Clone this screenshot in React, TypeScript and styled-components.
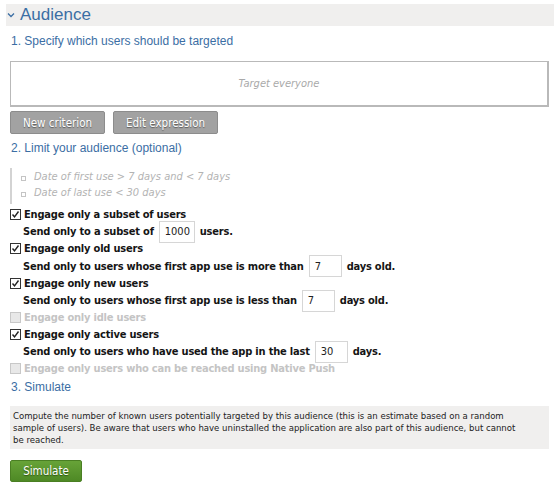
import React from "react";
import styled, { createGlobalStyle } from "styled-components";

const Global = createGlobalStyle`
  html, body { margin: 0; padding: 0; background: #fff; }
  body { font-family: "DejaVu Sans", Verdana, sans-serif; }
`;

const Page = styled.div`
  padding: 4px 4px 0 6px;
  width: 548px;
`;

const HeaderBar = styled.div`
  display: flex;
  align-items: center;
  height: 22px;
  background: #f0efee;
  padding-left: 1px;
  gap: 5px;
`;

const Title = styled.h1`
  margin: 0;
  font: 17px/22px "Liberation Sans", Arial, sans-serif;
  color: #3b6ea4;
`;

const Body = styled.div`
  padding: 0 0 0 4px;
  width: 539px;
`;

const StepTitle = styled.div<{ $top: number }>`
  font: 12px/16px "Liberation Sans", Arial, sans-serif;
  color: #3b6ea4;
  margin-top: ${(p) => p.$top}px;
  padding-left: 1px;
`;

const TargetBox = styled.div`
  margin-top: 12px;
  height: 43px;
  border: 2px solid #b9b9b9;
  border-width: 1px 2px 2px 1px;
  display: flex;
  align-items: center;
  justify-content: center;
  font: italic 11px "DejaVu Sans Condensed", "DejaVu Sans", sans-serif;
  color: #a9a9a9;
`;

const ButtonRow = styled.div`
  display: flex;
  gap: 8px;
  margin-top: 4px;
`;

const GreyButton = styled.button<{ $w: number }>`
  width: ${(p) => p.$w}px;
  height: 23px;
  background: #a2a2a2;
  border: 1px solid #8c8c8c;
  border-radius: 2px;
  color: #fff;
  font: 11.5px "DejaVu Sans Condensed", "DejaVu Sans", sans-serif;
  text-shadow: 0 1px 1px #5a5a5a;
  padding: 0;
`;

const Quote = styled.ul`
  margin: 12px 0 0 0;
  padding: 1px 0 3px 22px;
  border-left: 2px solid #d3d3d3;
  list-style: none;
`;

const QuoteItem = styled.li`
  position: relative;
  font: italic 11px/16px "DejaVu Sans Condensed", "DejaVu Sans", sans-serif;
  color: #b3b3b3;
  &::before {
    content: "";
    position: absolute;
    left: -13px;
    top: 7px;
    width: 3px;
    height: 3px;
    border: 1px solid #c4c4c4;
  }
`;

const Options = styled.div`
  margin-top: 2px;
  display: flex;
  flex-direction: column;
`;

const CheckRow = styled.label<{ $disabled?: boolean }>`
  display: flex;
  align-items: center;
  gap: 3px;
  height: 16.5px;
  font: bold 11px "DejaVu Sans Condensed", "DejaVu Sans", sans-serif;
  letter-spacing: -0.2px;
  color: ${(p) => (p.$disabled ? "#c4c4c4" : "#151515")};
`;

const Box = styled.span<{ $disabled?: boolean }>`
  width: 11px;
  height: 11px;
  box-sizing: border-box;
  border: 1px solid ${(p) => (p.$disabled ? "#c8c8c8" : "#333")};
  background: ${(p) => (p.$disabled ? "#e8e8e8" : "#fff")};
  display: flex;
  align-items: center;
  justify-content: center;
`;

const SubRow = styled.div`
  display: flex;
  align-items: center;
  height: 18px;
  padding-left: 13px;
  gap: 5px;
  font: bold 11px "DejaVu Sans Condensed", "DejaVu Sans", sans-serif;
  letter-spacing: -0.2px;
  color: #151515;
`;

const NumInput = styled.span<{ $w: number }>`
  display: inline-flex;
  align-items: center;
  width: ${(p) => p.$w}px;
  height: 22px;
  box-sizing: border-box;
  border: 1px solid #d6d6d6;
  padding-left: 5px;
  font: 11px "DejaVu Sans Condensed", "DejaVu Sans", sans-serif;
  letter-spacing: 0;
  color: #222;
`;

const InfoBox = styled.div`
  margin-top: 11px;
  background: #f0efee;
  padding: 4px 31px 3px 3px;
  font: 9.5px/12px "DejaVu Sans Condensed", "DejaVu Sans", sans-serif;
  color: #222;
`;

const GreenButton = styled.button`
  margin-top: 11px;
  width: 72px;
  height: 22px;
  border: 1px solid #4a7f23;
  border-radius: 2px;
  background: linear-gradient(#67a338, #4e8925);
  color: #fff;
  font: 11.5px "DejaVu Sans Condensed", "DejaVu Sans", sans-serif;
  text-shadow: 0 1px 1px #2d5412;
  padding: 0;
`;

const Check = ({ checked, disabled }: { checked?: boolean; disabled?: boolean }) => (
  <Box $disabled={disabled}>
    {checked && (
      <svg width="9" height="9" viewBox="0 0 9 9">
        <path d="M1.5 4.5 L3.5 6.8 L7.5 1.5" fill="none" stroke="#222" strokeWidth="1.4" />
      </svg>
    )}
  </Box>
);

export default function App() {
  return (
    <>
      <Global />
      <Page>
        <HeaderBar>
          <svg width="8" height="6" viewBox="0 0 8 6">
            <path d="M1 1.5 L4 4.5 L7 1.5" fill="none" stroke="#3b6ea4" strokeWidth="1.3" />
          </svg>
          <Title>Audience</Title>
        </HeaderBar>
        <Body>
          <StepTitle $top={7}>1. Specify which users should be targeted</StepTitle>
          <TargetBox>Target everyone</TargetBox>
          <ButtonRow>
            <GreyButton $w={95}>New criterion</GreyButton>
            <GreyButton $w={105}>Edit expression</GreyButton>
          </ButtonRow>
          <StepTitle $top={6}>2. Limit your audience (optional)</StepTitle>
          <Quote>
            <QuoteItem>Date of first use &gt; 7 days and &lt; 7 days</QuoteItem>
            <QuoteItem>Date of last use &lt; 30 days</QuoteItem>
          </Quote>
          <Options>
            <CheckRow><Check checked />Engage only a subset of users</CheckRow>
            <SubRow>Send only to a subset of <NumInput $w={36}>1000</NumInput> users.</SubRow>
            <CheckRow><Check checked />Engage only old users</CheckRow>
            <SubRow>Send only to users whose first app use is more than <NumInput $w={33}>7</NumInput> days old.</SubRow>
            <CheckRow><Check checked />Engage only new users</CheckRow>
            <SubRow>Send only to users whose first app use is less than <NumInput $w={33}>7</NumInput> days old.</SubRow>
            <CheckRow $disabled><Check disabled />Engage only idle users</CheckRow>
            <CheckRow><Check checked />Engage only active users</CheckRow>
            <SubRow>Send only to users who have used the app in the last <NumInput $w={33}>30</NumInput> days.</SubRow>
            <CheckRow $disabled><Check disabled />Engage only users who can be reached using Native Push</CheckRow>
          </Options>
          <StepTitle $top={2}>3. Simulate</StepTitle>
          <InfoBox>
            Compute the number of known users potentially targeted by this audience (this is an estimate based on a random sample of users). Be aware that users who have uninstalled the application are also part of this audience, but cannot be reached.
          </InfoBox>
          <GreenButton>Simulate</GreenButton>
        </Body>
      </Page>
    </>
  );
}
